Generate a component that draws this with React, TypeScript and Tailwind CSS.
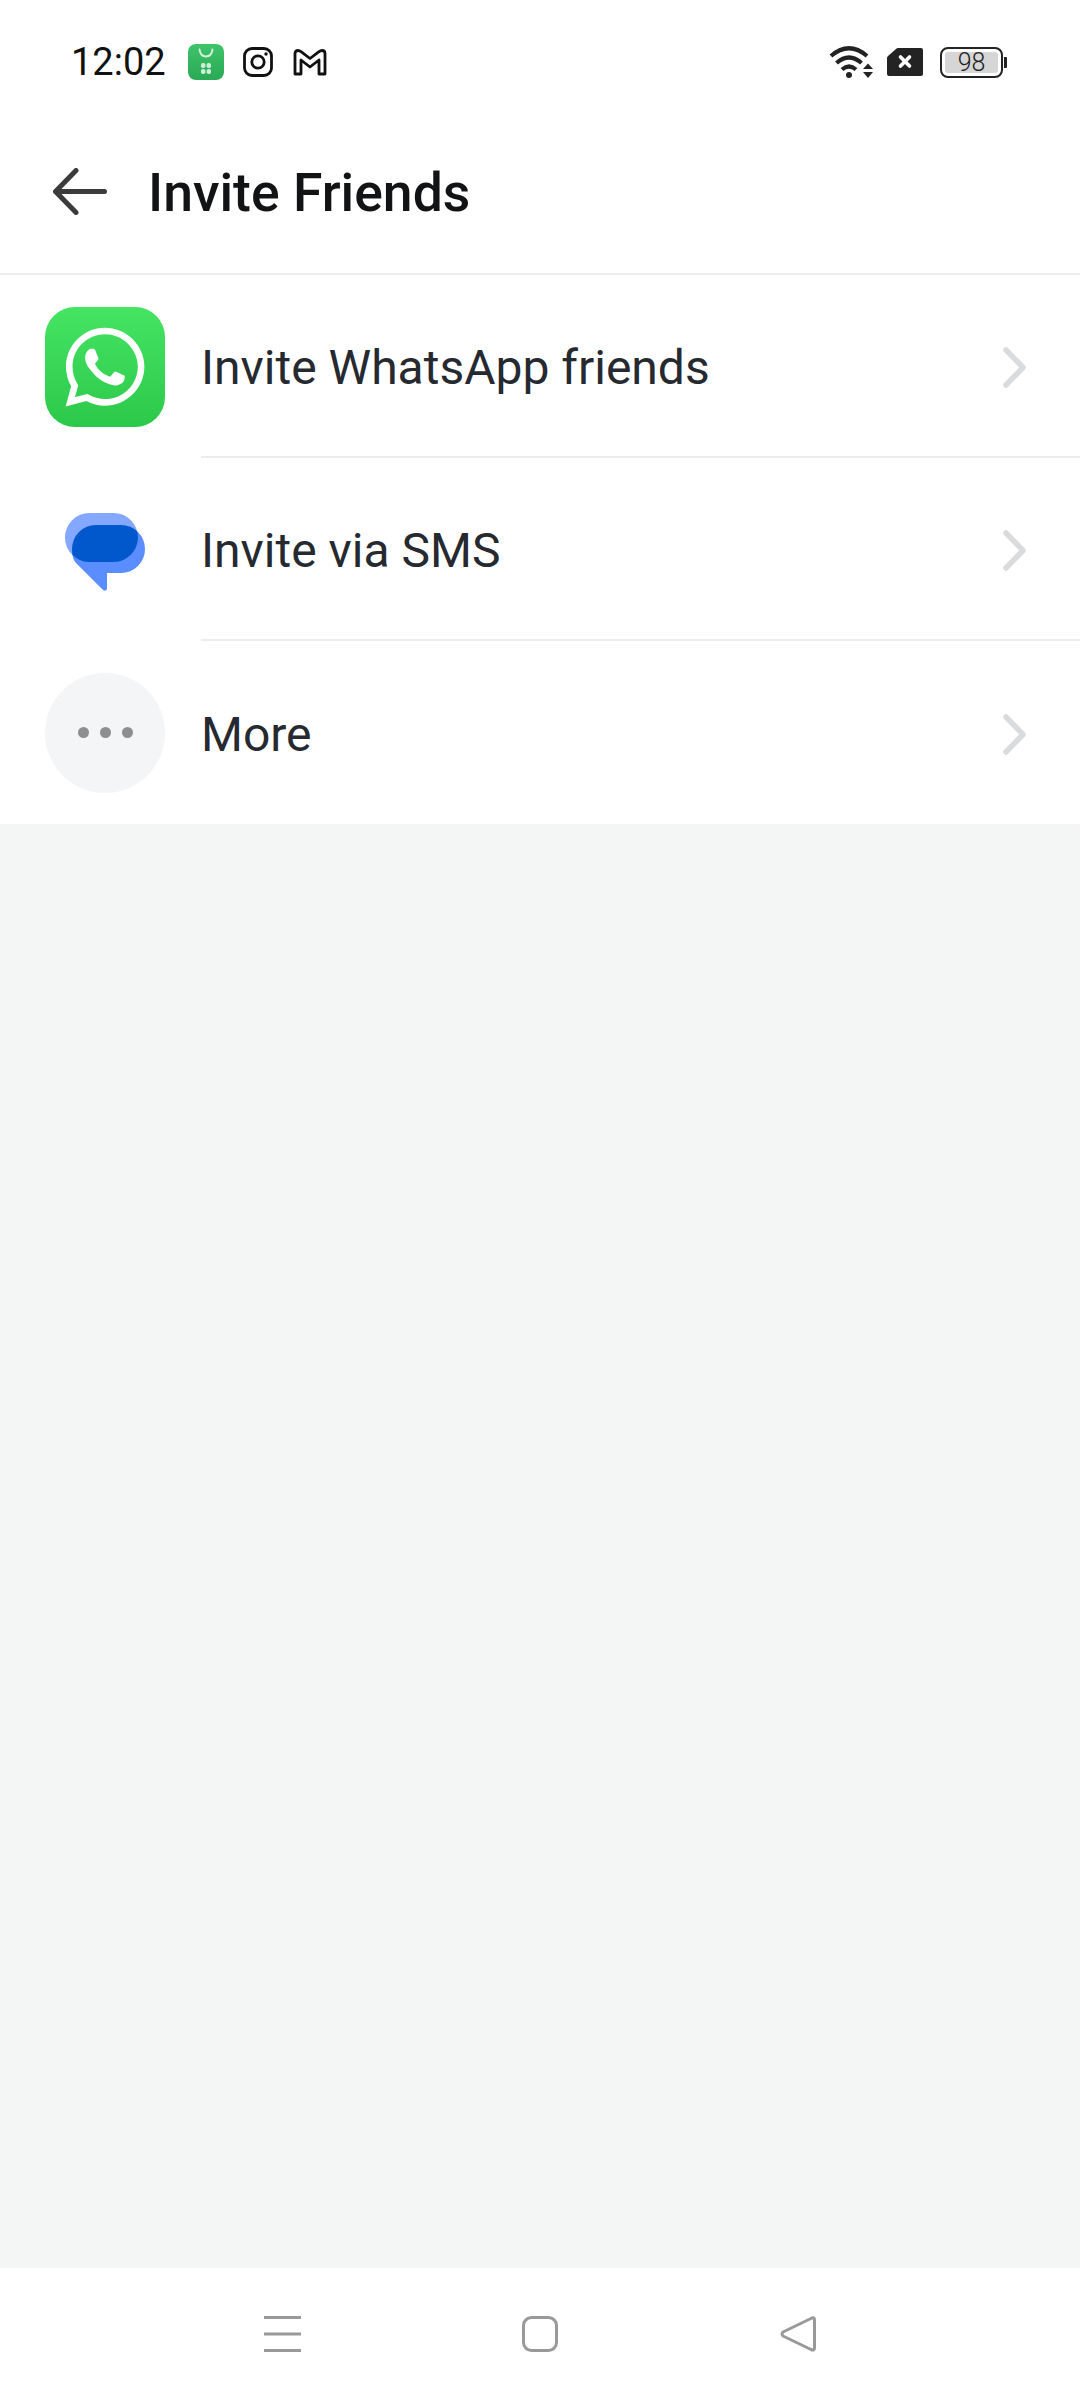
import React from "react";
import { FaWhatsapp } from "react-icons/fa";

function Chevron() {
  return (
    <svg width="27" height="43" viewBox="0 0 27 43" fill="none" className="shrink-0 mt-[3px] -mr-[1px]">
      <path d="M4 4 L21 21.5 L4 39" stroke="#d9dbdd" strokeWidth="5.5" strokeLinecap="round" strokeLinejoin="round" />
    </svg>
  );
}

function Messages() {
  return (
    <svg width="120" height="120" viewBox="0 0 120 120" className="-mt-[4px]">
      <defs>
        <clipPath id="light">
          <rect x="20" y="25" width="73" height="49" rx="24.5" />
        </clipPath>
      </defs>
      <path d="M51 37 H76 A24 24 0 0 1 76 85 H62 V101 Q61 104 58 102 L31 75 Q27 71 27 61 A24 24 0 0 1 51 37 Z" fill="#5a8dff" />
      <rect x="20" y="25" width="73" height="49" rx="24.5" fill="#84a8ff" />
      <g clipPath="url(#light)">
        <path d="M51 37 H76 A24 24 0 0 1 76 85 H62 V101 L31 75 Q27 71 27 61 A24 24 0 0 1 51 37 Z" fill="#0058cc" />
      </g>
    </svg>
  );
}

function Row({ icon, label, line }: { icon: React.ReactNode; label: string; line: boolean }) {
  return (
    <div className="flex items-stretch bg-white">
      <div className="w-[201px] pl-[45px] shrink-0 flex items-center">{icon}</div>
      <div className={`flex-1 h-[183px] flex items-center justify-between pr-[52px] ${line ? "border-b-2 border-[#ececec]" : ""}`}>
        <span className="text-[48px] text-[#262a30] leading-none pt-[5px]">{label}</span>
        <Chevron />
      </div>
    </div>
  );
}

export default function App() {
  return (
    <div className="w-[1080px] h-[2400px] flex flex-col bg-[#f4f6f6] overflow-hidden" style={{ fontFamily: "Roboto, sans-serif" }}>
      {/* status bar */}
      <div className="h-[124px] bg-white flex items-center pl-[71px] pr-[73px]">
        <span className="text-[38px] text-[#111] leading-none w-[117px]">12:02</span>
        <svg width="36" height="36" viewBox="0 0 36 36" className="mr-[19px]">
          <defs>
            <linearGradient id="g" x1="0" y1="0" x2="0" y2="1">
              <stop offset="0" stopColor="#3fc46a" />
              <stop offset="1" stopColor="#2aa956" />
            </linearGradient>
          </defs>
          <rect width="36" height="36" rx="8" fill="url(#g)" />
          <path d="M11.5 5.5 Q12.5 12.5 18 12.5 Q23.5 12.5 24.5 5.5" fill="none" stroke="#d7f3df" strokeWidth="1.8" strokeLinecap="round" />
          <g fill="#cdeed7">
            <rect x="13" y="19" width="4.4" height="5" rx="1.8" />
            <rect x="18.6" y="19" width="4.4" height="5" rx="1.8" />
            <rect x="13" y="25" width="4.4" height="5" rx="1.8" />
            <rect x="18.6" y="25" width="4.4" height="5" rx="1.8" />
          </g>
        </svg>
        <svg width="30" height="30" viewBox="0 0 30 30" fill="none" className="mr-[20px]">
          <rect x="1.5" y="1.5" width="27" height="27" rx="7.5" stroke="#111" strokeWidth="2.8" />
          <circle cx="15" cy="15" r="6.2" stroke="#111" strokeWidth="2.8" />
          <circle cx="23" cy="7" r="1.7" fill="#111" />
        </svg>
        <svg width="34" height="27" viewBox="0 0 34 27" fill="none">
          <path d="M2 25 V4.5 Q2 1.5 5 1.5 Q6.5 1.5 8 2.7 L17 9.5 L26 2.7 Q27.5 1.5 29 1.5 Q32 1.5 32 4.5 V25 H26 V11 L17 18 L8 11 V25 Z" stroke="#111" strokeWidth="2.8" strokeLinejoin="round" />
        </svg>
        <div className="flex-1" />
        <svg width="44" height="34" viewBox="0 0 44 34" fill="none" className="mr-[14px]">
          <path d="M2 11 Q20 -4.5 38 11" stroke="#222" strokeWidth="4.2" />
          <path d="M7.5 18 Q20 7 32.5 18" stroke="#222" strokeWidth="4.2" />
          <path d="M13 24.5 Q20 18.5 27 24.5" stroke="#222" strokeWidth="4.2" />
          <circle cx="20" cy="30" r="3" fill="#222" />
          <path d="M34 24 L39 18.5 L44 24 Z M34 27 L39 33 L44 27 Z" fill="#222" />
        </svg>
        <svg width="36" height="30" viewBox="0 0 36 30" className="mr-[17px]">
          <path d="M11 1 H34 Q36 1 36 3 V27 Q36 29 34 29 H2 Q0 29 0 27 V11 Q0 10 1 9 L9 2 Q10 1 11 1 Z" fill="#232323" />
          <path d="M13.5 10 L22.5 19 M22.5 10 L13.5 19" stroke="#fff" strokeWidth="3.6" strokeLinecap="round" />
        </svg>
        <div className="relative w-[67px] h-[31px] shrink-0 flex items-center">
          <div className="w-[63px] h-[31px] rounded-[8px] border-[2.5px] border-[#232323] p-[3px] flex">
            <div className="flex-1 rounded-[3px] bg-[#d6d6d6] flex items-center justify-center">
              <span className="text-[25px] leading-none text-[#222]" style={{ fontWeight: 300 }}>98</span>
            </div>
          </div>
          <div className="w-[3px] h-[11px] ml-[1px] bg-[#232323] rounded-r-[1px]" />
        </div>
      </div>

      {/* header */}
      <div className="h-[149px] bg-white flex items-center pl-[53px] pb-[14px]">
        <svg width="54" height="47" viewBox="0 0 54 47" fill="none" className="mr-[41px] -mt-[1px]">
          <path d="M23 2.5 L2.5 23.5 L23 44.5 M2.5 23.5 H51.5" stroke="#3b3b3d" strokeWidth="5" strokeLinecap="round" strokeLinejoin="round" />
        </svg>
        <span className="text-[53.5px] font-medium text-[#111315] leading-none pt-[3px]">Invite Friends</span>
      </div>
      <div className="h-[2px] bg-[#ececec]" />

      {/* list */}
      <Row
        line
        label="Invite WhatsApp friends"
        icon={
          <div className="w-[120px] h-[120px] rounded-[30px] bg-gradient-to-b from-[#45e463] to-[#2bc84a] flex items-center justify-center">
            <FaWhatsapp className="text-white" size={90} />
          </div>
        }
      />
      <Row line label="Invite via SMS" icon={<Messages />} />
      <Row
        line={false}
        label="More"
        icon={
          <div className="w-[120px] h-[120px] rounded-full bg-[#f4f5f7] flex items-center justify-center gap-[11px]">
            <div className="w-[11px] h-[11px] rounded-full bg-[#8e8e8e]" />
            <div className="w-[11px] h-[11px] rounded-full bg-[#8e8e8e]" />
            <div className="w-[11px] h-[11px] rounded-full bg-[#8e8e8e]" />
          </div>
        }
      />

      <div className="flex-1" />

      {/* nav */}
      <div className="h-[132px] bg-white flex items-start pt-[48px] pl-[153px]">
        <div className="w-[258px] flex justify-center">
          <svg width="37" height="36" viewBox="0 0 37 36">
            <path d="M0 1.5 H37 M0 18 H37 M0 34.5 H37" stroke="#999" strokeWidth="3" />
          </svg>
        </div>
        <div className="w-[258px] flex justify-center">
          <svg width="36" height="36" viewBox="0 0 36 36" fill="none">
            <rect x="1.5" y="1.5" width="33" height="33" rx="8" stroke="#999" strokeWidth="3" />
          </svg>
        </div>
        <div className="w-[258px] flex justify-center">
          <svg width="36" height="36" viewBox="0 0 36 36" fill="none">
            <path d="M32 2 Q34.5 1 34.5 4 V32 Q34.5 35 31 33.5 L3 20 Q1 18 3 16 Z" stroke="#999" strokeWidth="3" strokeLinejoin="round" />
          </svg>
        </div>
      </div>
    </div>
  );
}
